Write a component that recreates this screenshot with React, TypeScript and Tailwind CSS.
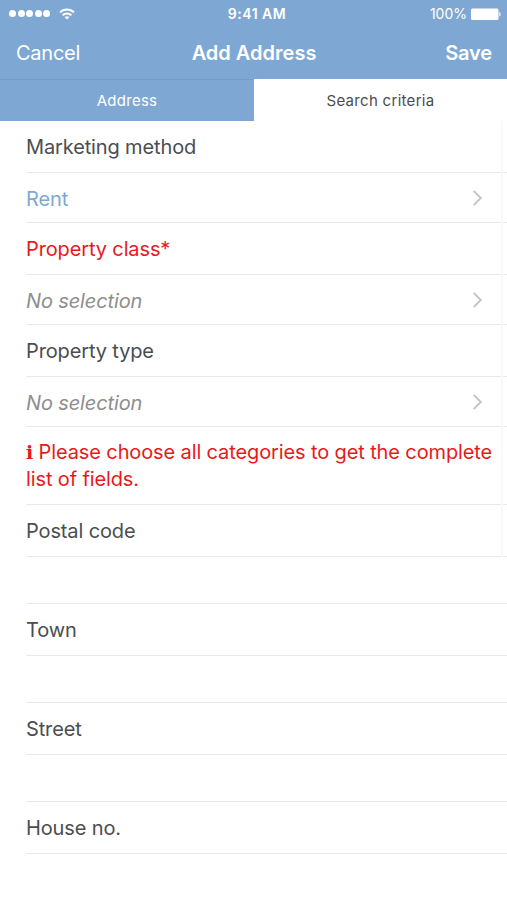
import React from "react";

type RowProps = {
    text?: string;
    className: string;
    chevron?: boolean;
};

const rows: RowProps[] = [
    { text: "Marketing method", className: "h-[52px] text-[#4b4d50]" },
    { text: "Rent", className: "h-[50px] pt-[3px] text-[#7ea8d3]", chevron: true },
    { text: "Property class*", className: "h-[52px] text-[#e8191b]" },
    { text: "No selection", className: "h-[50px] pt-[3px] italic text-[#8e8e8e]", chevron: true },
    { text: "Property type", className: "h-[52px] text-[#4b4d50]" },
    { text: "No selection", className: "h-[50px] pt-[3px] italic text-[#8e8e8e]", chevron: true },
];

const fields: RowProps[] = [
    { text: "Postal code", className: "h-[52px] text-[#4b4d50]" },
    { className: "h-[47px]" },
    { text: "Town", className: "h-[52px] text-[#4b4d50]" },
    { className: "h-[47px]" },
    { text: "Street", className: "h-[52px] text-[#4b4d50]" },
    { className: "h-[47px]" },
    { text: "House no.", className: "h-[52px] text-[#4b4d50]" },
];

const Row = ({ text, className, chevron }: RowProps) => {
    return (
        <li
            className={`flex items-center justify-between border-b border-[#e9e9e9] pr-[24px] ${className}`}
        >
            <span>{text}</span>
            {chevron && (
                <svg width="11" height="18" viewBox="0 0 11 18" fill="none" className="-mt-[3px]">
                    <path d="M1.7 1.9L8.8 9L1.7 16.1" stroke="#c4c4c6" strokeWidth="1.9" />
                </svg>
            )}
        </li>
    );
};

const StatusBar = () => {
    return (
        <div className="flex h-[27px] items-center pl-[9px] pr-[6px] text-[14px] tracking-normal">
            <div className="flex flex-1 items-center gap-[9px]">
                <div className="flex gap-[1.5px]">
                    {[0, 1, 2, 3, 4].map((dot) => (
                        <span key={dot} className="h-[7px] w-[7px] rounded-full bg-white" />
                    ))}
                </div>
                <svg width="16" height="12" viewBox="0 0 16 12" fill="none" stroke="#fff" strokeWidth="2">
                    <path d="M1 4.4C5 0.5 11 0.5 15 4.4" />
                    <path d="M3.6 7.2C6.1 4.8 9.9 4.8 12.4 7.2" />
                    <path d="M8 11.6L5.6 9.2C6.9 7.9 9.1 7.9 10.4 9.2Z" fill="#fff" stroke="none" />
                </svg>
            </div>
            <span className="-mr-[3px] ml-[1px] font-semibold tracking-[0.5px]">9:41 AM</span>
            <div className="flex flex-1 items-center justify-end gap-[4px]">
                <span>100%</span>
                <svg width="30" height="12" viewBox="0 0 30 12" fill="#fff">
                    <rect x="0" y="0.5" width="27.5" height="11.5" rx="1.5" />
                    <path d="M28.3 4C30 4.6 30 8 28.3 8.6Z" />
                </svg>
            </div>
        </div>
    );
};

const App = () => {
    return (
        <div className="relative h-[900px] w-[507px] overflow-hidden bg-white font-['Inter',sans-serif] text-[20px] tracking-[-0.13px] text-[#4b4d50]">
            <header className="h-[79px] bg-[#7ea8d3] text-white">
                <StatusBar />
                <div className="flex h-[51px] items-center px-[16px]">
                    <span className="flex-1 tracking-[-0.25px]">Cancel</span>
                    <h1 className="font-semibold tracking-normal">Add Address</h1>
                    <span className="-mr-[1px] flex-1 text-right font-semibold">Save</span>
                </div>
            </header>
            <div className="flex h-[42px] text-center text-[15px] leading-[42px] tracking-[0.25px]">
                <div className="w-[254px] border-t border-[#749fcc] bg-[#7ea8d3] leading-[41px] text-white">
                    Address
                </div>
                <div className="flex-1 leading-[43px] tracking-[0.3px]">Search criteria</div>
            </div>
            <ul className="pl-[26px]">
                {rows.map((row, i) => (
                    <Row key={i} {...row} />
                ))}
                <li className="h-[78px] border-b border-[#e9e9e9] pt-[12px] leading-[27px] tracking-[-0.12px] text-[#e8191b]">
                    <b className="font-['DejaVu_Serif',serif] text-[19px] leading-none">i</b> Please choose all
                    categories to get the complete
                    <br />
                    list of fields.
                </li>
                {fields.map((field, i) => (
                    <Row key={i} {...field} />
                ))}
            </ul>
            <div className="absolute left-[501px] top-[121px] h-[436px] w-[2px] bg-[#f9f9f9]" />
        </div>
    );
};

export default App;
